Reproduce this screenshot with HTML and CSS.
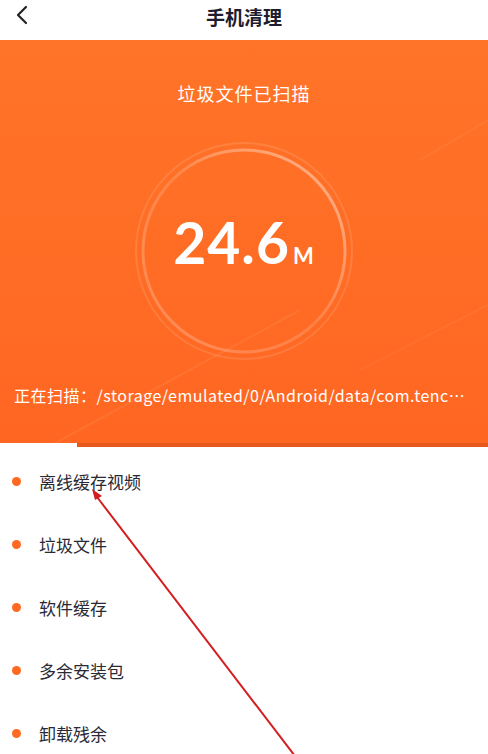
FILE: index.html
```html
<!DOCTYPE html>
<html lang="zh-CN">
<head>
    <meta charset="UTF-8">
    <meta name="viewport" content="width=device-width, initial-scale=1.0">
    <title>手机清理</title>
    <link rel="stylesheet" href="styles.css">
</head>
<body>
    <div class="page">
        <div class="header">
            <span class="back">
                <svg width="14" height="20" viewBox="0 0 14 20"><path d="M11 2 L3 10 L11 18" fill="none" stroke="#222" stroke-width="2.2" stroke-linecap="round" stroke-linejoin="round"/></svg>
            </span>
            <h1>手机清理</h1>
        </div>

        <div class="scan">
            <svg class="streaks" width="488" height="406" viewBox="0 0 488 406">
                <path d="M50 406 L300 270" stroke="rgba(255,255,255,0.07)" stroke-width="2" fill="none"/>
                <path d="M360 330 L488 265" stroke="rgba(255,255,255,0.05)" stroke-width="2" fill="none"/>
                <path d="M420 120 L488 80" stroke="rgba(255,255,255,0.05)" stroke-width="2" fill="none"/>
            </svg>
            <div class="scan-title">垃圾文件已扫描</div>
            <div class="ring">
                <svg class="ring-svg" width="230" height="230" viewBox="0 0 230 230">
                    <defs>
                        <linearGradient id="rg" x1="1" y1="0" x2="0" y2="1">
                            <stop offset="0" stop-color="#fff" stop-opacity="0.5"/>
                            <stop offset="0.5" stop-color="#fff" stop-opacity="0.15"/>
                            <stop offset="1" stop-color="#fff" stop-opacity="0.25"/>
                        </linearGradient>
                    </defs>
                    <circle cx="115" cy="115" r="108" fill="none" stroke="rgba(255,255,255,0.12)" stroke-width="2"/>
                    <circle cx="115" cy="115" r="101" fill="none" stroke="url(#rg)" stroke-width="3"/>
                </svg>
                <div class="size">24.6<span class="unit">M</span></div>
            </div>
            <div class="scan-path">正在扫描：/storage/emulated/0/Android/data/com.tenc…</div>
            <div class="progress"><div class="progress-fill" style="width: 77px"></div></div>
        </div>

        <ul class="items">
            <li>离线缓存视频</li>
            <li>垃圾文件</li>
            <li>软件缓存</li>
            <li>多余安装包</li>
            <li>卸载残余</li>
        </ul>

        <svg class="arrow" width="488" height="754" viewBox="0 0 488 754">
            <line x1="97" y1="497" x2="298" y2="760" stroke="#d21e1e" stroke-width="2"/>
            <polygon points="92,489 102,496 95,500" fill="#d21e1e"/>
        </svg>
    </div>
</body>
</html>
```

FILE: styles.css
```css
body {
    margin: 0;
    font-family: "Noto Sans CJK SC", "Lato", sans-serif;
    background-color: white;
}

.page {
    position: relative;
    width: 488px;
    height: 754px;
    overflow: hidden;
}

.header {
    height: 40px;
    display: flex;
    align-items: center;
    justify-content: center;
    position: relative;
    background-color: white;
}

.back {
    position: absolute;
    left: 15px;
    top: 5px;
}

.header h1 {
    margin: 0;
    font-size: 19px;
    font-weight: bold;
    color: #1d1d2f;
    margin-top: -8px;
}

.scan {
    position: relative;
    height: 407px;
    background: linear-gradient(to bottom, #ff7428, #ff6622);
    color: white;
}

.streaks {
    position: absolute;
    left: 0;
    top: 0;
}

.scan-title {
    text-align: center;
    font-size: 18px;
    padding-top: 38px;
    line-height: 30px;
    letter-spacing: 1px;
}

.ring {
    width: 230px;
    height: 230px;
    margin: 28px auto 0;
    display: flex;
    align-items: center;
    justify-content: center;
    position: relative;
}

.ring-svg {
    position: absolute;
    left: 0;
    top: 0;
}

.size {
    font-family: "Lato", sans-serif;
    font-weight: bold;
    font-size: 57px;
    letter-spacing: 1px;
    margin-top: -18px;
}

.unit {
    font-size: 22px;
    margin-left: 3px;
}

.scan-path {
    font-size: 16px;
    padding-left: 14px;
    margin-top: 17px;
    white-space: nowrap;
    letter-spacing: 0.5px;
}

.progress {
    position: absolute;
    left: 0;
    right: 0;
    bottom: 0;
    height: 4px;
    background-color: #e8571c;
}

.progress-fill {
    height: 100%;
    background-color: white;
}

.items {
    list-style: none;
    margin: 0;
    padding: 3px 0 0;
}

.items li {
    height: 63px;
    display: flex;
    align-items: center;
    padding-left: 39px;
    position: relative;
    font-size: 17px;
    color: #2a2a36;
}

.items li::before {
    content: "";
    position: absolute;
    left: 12px;
    width: 9px;
    height: 9px;
    border-radius: 50%;
    background-color: #ff6a22;
}

.arrow {
    position: absolute;
    left: 0;
    top: 0;
    pointer-events: none;
}
```
